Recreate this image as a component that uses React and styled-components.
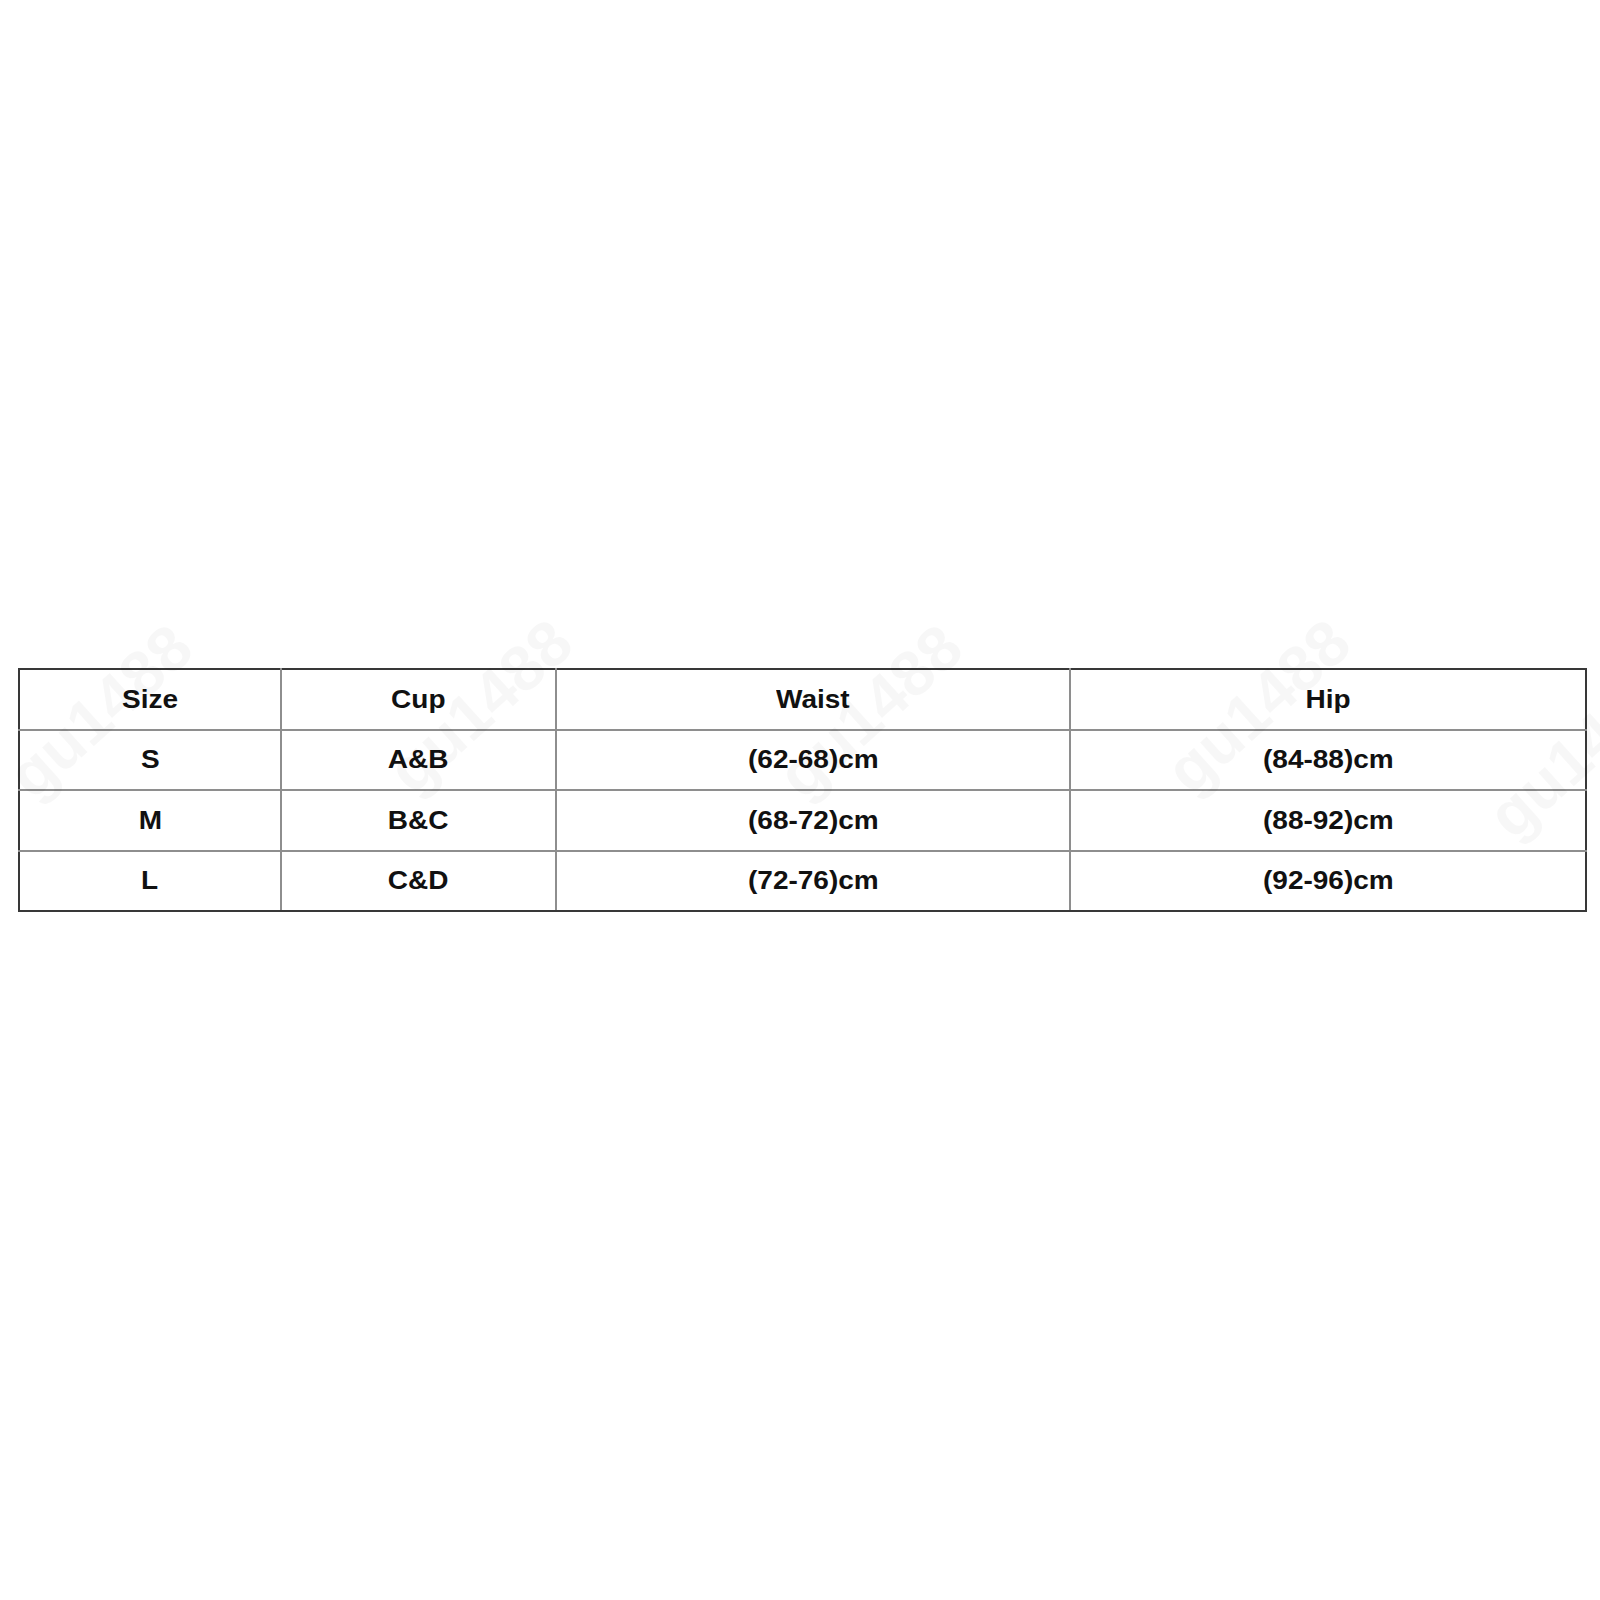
import React from 'react'
import styled, { createGlobalStyle } from 'styled-components'

const rows = [
  ['S', 'A&B', '(62-68)cm', '(84-88)cm'],
  ['M', 'B&C', '(68-72)cm', '(88-92)cm'],
  ['L', 'C&D', '(72-76)cm', '(92-96)cm'],
]

const widths = [262, 275, 514, 516]
const marks = [
  { x: 0, y: 20 },
  { x: 380, y: 15 },
  { x: 770, y: 20 },
  { x: 1158, y: 15 },
  { x: 1480, y: 60 },
]

const App = () => {
  return (
    <>
      <GlobalStyle />
      <Page>
        <Wrap>
          <SizeTable>
            <colgroup>
              {widths.map((w, i) => (
                <col key={i} style={{ width: w }} />
              ))}
            </colgroup>
            <tbody>
              <tr>
                {['Size', 'Cup', 'Waist', 'Hip'].map((h) => (
                  <Cell key={h}>
                    <Label>{h}</Label>
                  </Cell>
                ))}
              </tr>
              {rows.map((r) => (
                <tr key={r[0]}>
                  {r.map((c, i) => (
                    <Cell key={i}>
                      <Label>{c}</Label>
                    </Cell>
                  ))}
                </tr>
              ))}
            </tbody>
          </SizeTable>
          <Marks aria-hidden="true">
            {marks.map((m, i) => (
              <Mark key={i} style={{ left: m.x, top: m.y }}>
                gu1488
              </Mark>
            ))}
          </Marks>
        </Wrap>
      </Page>
    </>
  )
}

//Styled Component
const GlobalStyle = createGlobalStyle`
  body {
    margin: 0;
    background: #fff;
    font-family: "Liberation Sans", Arial, sans-serif;
  }
`

const Page = styled.div`
  width: 1600px;
  min-height: 1600px;
  padding: 668px 0 0 18px;
  box-sizing: border-box;
  overflow: hidden;
`

const Wrap = styled.div`
  position: relative;
  width: 1567px;
`

const SizeTable = styled.table`
  width: 1567px;
  table-layout: fixed;
  border-collapse: collapse;

  tr:first-child td {
    border-top-color: #383838;
  }
  tr:last-child td {
    border-bottom-color: #383838;
  }
  td:first-child {
    border-left-color: #383838;
  }
  td:last-child {
    border-right-color: #383838;
  }
`

const Cell = styled.td`
  height: 58.5px;
  padding: 0;
  text-align: center;
  vertical-align: middle;
  border: 2px solid #8e8e8e;
  color: #111;
  font-size: 25px;
  font-weight: bold;
`

const Label = styled.span`
  display: inline-block;
  transform: scaleX(1.12);
`

const Marks = styled.div`
  position: absolute;
  inset: 0;
  pointer-events: none;
`

const Mark = styled.div`
  position: absolute;
  font-family: "Liberation Sans", Arial, sans-serif;
  font-size: 64px;
  font-weight: bold;
  color: rgba(0, 0, 0, 0.03);
  transform: rotate(-42deg);
  transform-origin: left center;
  white-space: nowrap;
  margin-top: 60px;
`

export default App
